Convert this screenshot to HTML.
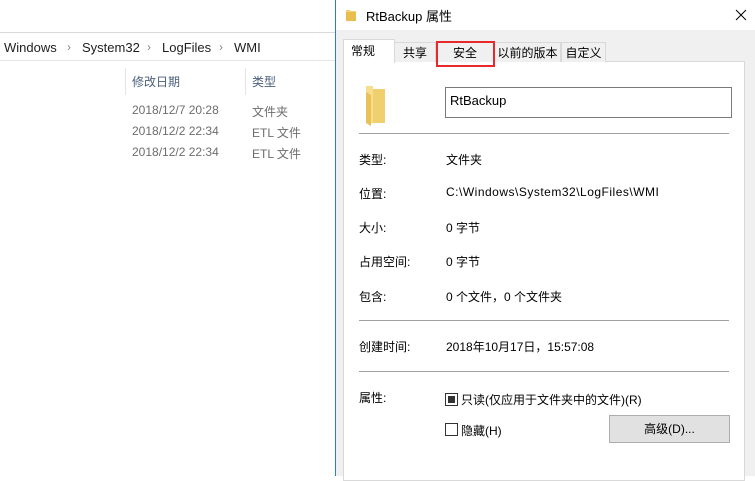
<!DOCTYPE html>
<html><head><meta charset="utf-8"><style>
*{margin:0;padding:0;box-sizing:border-box}
body{width:755px;height:476px;overflow:hidden;background:#fff;position:relative;font-family:"Liberation Sans","Noto Sans CJK SC",sans-serif;font-size:12px;color:#000}
.a{position:absolute;white-space:nowrap}
.g{color:#6d6d6d}
.sep{position:absolute;height:1px;background:#a0a0a0;left:359px;width:370px}
.tab{position:absolute;border:1px solid #d9d9d9;border-bottom:none;background:#f0f0f0;height:21px;top:41px;text-align:center;line-height:20px}
.lbl{position:absolute;left:359px}
.val{position:absolute;left:446px}
.ch{position:absolute;top:40px;font-size:12px;color:#888}
</style></head><body>
<div class="a" style="left:0;top:32px;width:335px;height:1px;background:#d9d9d9"></div>
<div class="a" style="left:0;top:60px;width:335px;height:1px;background:#e5e5e5"></div>
<div class="a" style="left:4px;top:40px;font-size:13px;color:#1e1e1e">Windows</div>
<div class="ch" style="left:67px">›</div>
<div class="a" style="left:82px;top:40px;font-size:13px;color:#1e1e1e">System32</div>
<div class="ch" style="left:147px">›</div>
<div class="a" style="left:162px;top:40px;font-size:13px;color:#1e1e1e">LogFiles</div>
<div class="ch" style="left:219px">›</div>
<div class="a" style="left:234px;top:40px;font-size:13px;color:#1e1e1e">WMI</div>
<div class="a" style="left:125px;top:68px;width:1px;height:27px;background:#e5e5e5"></div>
<div class="a" style="left:245px;top:68px;width:1px;height:27px;background:#e5e5e5"></div>
<div class="a" style="left:132px;top:73px;color:#4c607a">修改日期</div>
<div class="a" style="left:252px;top:73px;color:#4c607a">类型</div>
<div class="a g" style="left:132px;top:103px">2018/12/7 20:28</div>
<div class="a g" style="left:252px;top:103px">文件夹</div>
<div class="a g" style="left:132px;top:124px">2018/12/2 22:34</div>
<div class="a g" style="left:252px;top:124px">ETL 文件</div>
<div class="a g" style="left:132px;top:145px">2018/12/2 22:34</div>
<div class="a g" style="left:252px;top:145px">ETL 文件</div>
<div class="a" style="left:335px;top:0;width:420px;height:476px;background:#f0f0f0;border-left:1px solid #2b7bd4"></div>
<div class="a" style="left:336px;top:0;width:419px;height:30px;background:#fff"></div>
<svg class="a" style="left:345px;top:8px" width="12" height="14"><path d="M1 2h4l1 1h5v10H1z" fill="#f3d37a"/><path d="M1 4h10v9H1z" fill="#e9be4f"/></svg>
<div class="a" style="left:366px;top:6px;font-size:13px">RtBackup 属性</div>
<svg class="a" style="left:735px;top:9px" width="12" height="12"><path d="M1 1L11 11M11 1L1 11" stroke="#000" stroke-width="1"/></svg>
<div class="a" style="left:343px;top:61px;width:402px;height:420px;background:#fff;border:1px solid #d9d9d9"></div>
<div class="tab" style="left:394px;width:42px;top:42px;height:20px">共享</div>
<div class="tab" style="left:436px;width:58px;top:42px;height:20px">安全</div>
<div class="tab" style="left:494px;width:67px;top:42px;height:20px">以前的版本</div>
<div class="tab" style="left:561px;width:45px;top:42px;height:20px">自定义</div>
<div class="tab" style="left:343px;width:52px;top:39px;height:24px;background:#fff;text-align:left;padding-left:7px;line-height:22px">常规</div>
<div class="a" style="left:436px;top:41px;width:59px;height:26px;border:2px solid #e8282b"></div>
<svg class="a" style="left:364px;top:86px" width="24" height="40"><path d="M2 0h7v3h12v34H2z" fill="#f7dd8c"/><path d="M2 6l5 3v31l-5-3z" fill="#e8c15a"/><path d="M9 3l12 0v34H9z" fill="#f0cf6e"/></svg>
<div class="a" style="left:445px;top:87px;width:287px;height:31px;border:1px solid #7a7a7a;background:#fff;padding:5px 0 0 4px;font-size:13px">RtBackup</div>
<div class="sep" style="top:133px"></div>
<div class="lbl" style="top:151px">类型:</div><div class="val" style="top:151px">文件夹</div>
<div class="lbl" style="top:185px">位置:</div><div class="val" style="top:185px;letter-spacing:0.5px">C:\Windows\System32\LogFiles\WMI</div>
<div class="lbl" style="top:219px">大小:</div><div class="val" style="top:219px">0 字节</div>
<div class="lbl" style="top:253px">占用空间:</div><div class="val" style="top:253px">0 字节</div>
<div class="lbl" style="top:288px">包含:</div><div class="val" style="top:288px">0 个文件，0 个文件夹</div>
<div class="sep" style="top:320px"></div>
<div class="lbl" style="top:338px">创建时间:</div><div class="val" style="top:338px">2018年10月17日，15:57:08</div>
<div class="sep" style="top:371px"></div>
<div class="lbl" style="top:389px">属性:</div>
<div class="a" style="left:445px;top:393px;width:13px;height:13px;border:1px solid #333;background:#fff"><div style="margin:2px;width:7px;height:7px;background:#333"></div></div>
<div class="a" style="left:461px;top:391px">只读(仅应用于文件夹中的文件)(R)</div>
<div class="a" style="left:445px;top:423px;width:13px;height:13px;border:1px solid #333;background:#fff"></div>
<div class="a" style="left:461px;top:422px">隐藏(H)</div>
<div class="a" style="left:609px;top:415px;width:121px;height:28px;border:1px solid #adadad;background:#e1e1e1;text-align:center;line-height:26px">高级(D)...</div>
</body></html>
